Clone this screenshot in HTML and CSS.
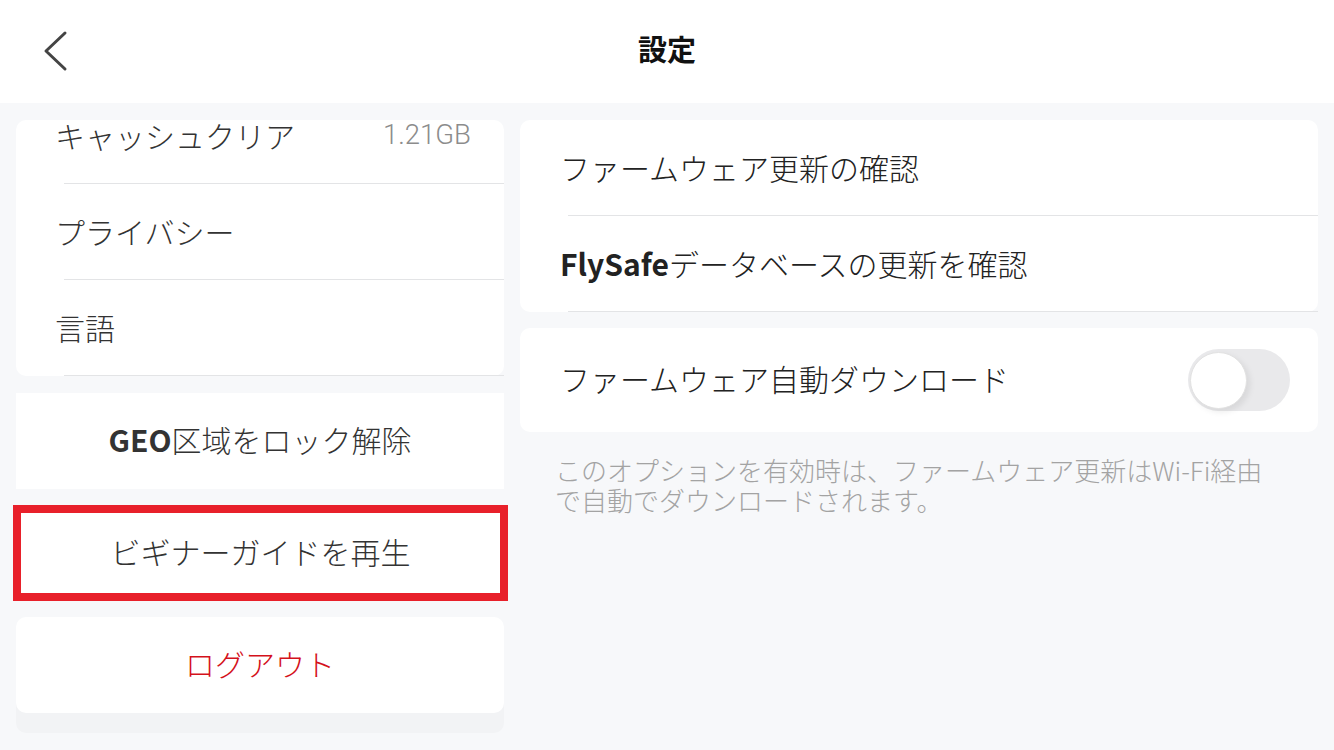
FILE: index.html
```html
<!DOCTYPE html>
<html lang="ja">
<head>
<meta charset="utf-8">
<title>設定</title>
<link rel="stylesheet" href="styles.css">
</head>
<body>
<header class="topbar">
  <div class="topbar-left">
    <svg class="back" width="30" height="44" viewBox="0 0 30 44" aria-hidden="true">
      <polyline points="24,3 5,21 24,39" fill="none" stroke="#444" stroke-width="3" stroke-linecap="round" stroke-linejoin="round"/>
    </svg>
  </div>
  <h1 class="title">設定</h1>
  <div></div>
</header>
<main class="content">
  <section class="col-left">
    <div class="card list-card">
      <div class="row first"><span class="label">キャッシュクリア</span><span class="value">1.21GB</span></div>
      <div class="row"><span class="label">プライバシー</span></div>
      <div class="row"><span class="label">言語</span></div>
    </div>
    <div class="card button-card geo"><span class="btn-text"><b class="latin">GEO</b>区域をロック解除</span></div>
    <div class="button-card highlight"><span class="btn-text">ビギナーガイドを再生</span></div>
    <div class="card button-card logout"><span class="btn-text red">ログアウト</span></div>
  </section>
  <section class="col-right">
    <div class="card">
      <div class="row r-row"><span class="label dark">ファームウェア更新の確認</span></div>
      <div class="row r-row"><span class="label dark"><b class="latin">FlySafe</b>データベースの更新を確認</span></div>
    </div>
    <div class="card toggle-card">
      <span class="label dark">ファームウェア自動ダウンロード</span>
      <span class="switch"><span class="knob"></span></span>
    </div>
    <p class="caption">このオプションを有効時は、ファームウェア更新はWi-Fi経由で自動でダウンロードされます。</p>
  </section>
</main>
</body>
</html>
```
FILE: styles.css
```css
* { box-sizing: border-box; }
html, body { margin: 0; padding: 0; }
body {
  width: 1334px;
  height: 750px;
  overflow: hidden;
  background: #f7f8fa;
  font-family: "Noto Sans CJK JP", "Noto Sans", sans-serif;
  color: #333;
}
.topbar {
  height: 103px;
  background: #fff;
  display: grid;
  grid-template-columns: 1fr auto 1fr;
  align-items: center;
}
.topbar-left { padding-left: 41px; display: flex; align-items: center; }
.back { display: block; }
.title {
  margin: 0 0 6px 0;
  font-size: 29px;
  font-weight: 700;
  color: #111;
  line-height: 1;
}
.content {
  display: grid;
  grid-template-columns: 488px 798px;
  column-gap: 16px;
  padding: 17px 16px 0 16px;
  align-items: start;
}
.col-left { display: flex; flex-direction: column; }
.col-right { display: flex; flex-direction: column; }
.card {
  background: #fff;
  border-radius: 10px;
}
.list-card {
  height: 256px;
}
.row {
  height: 96px;
  display: flex;
  align-items: center;
  justify-content: space-between;
  padding: 0 33px 2px 39px;
  position: relative;
}
.row.first {
  height: 64px;
  align-items: flex-start;
  padding-top: 0;
}
.row::after {
  content: "";
  position: absolute;
  left: 48px;
  right: 0;
  bottom: 0;
  height: 1px;
  background: #e3e4e6;
}
.label {
  font-size: 30px;
  font-weight: 300;
  line-height: 1;
  color: #333;
}
.label.dark { color: #222; }
.value {
  font-family: "Roboto", "Liberation Sans", sans-serif;
  font-size: 27.5px;
  font-weight: 300;
  line-height: 30px;
  color: #8c8c8c;
}
.latin { font-weight: 700; }
.button-card {
  height: 96px;
  display: flex;
  align-items: center;
  justify-content: center;
  background: #fff;
  padding-bottom: 4px;
}
.geo { margin-top: 17px; border-radius: 0; }
.btn-text { font-size: 30px; font-weight: 300; color: #333; line-height: 1; }
.btn-text .latin { color: #333; font-weight: 700; }
.highlight {
  margin: 16px -4px 0 -3px;
  border: 8px solid #e8202a;
}
.logout {
  margin-top: 16px;
  border-radius: 10px;
  box-shadow: 0 20px 0 #f2f3f5;
}
.red { color: #d4111b; }
.r-row { padding-left: 40px; }
.toggle-card {
  margin-top: 16px;
  height: 104px;
  display: flex;
  align-items: center;
  justify-content: space-between;
  padding: 0 28px 0 40px;
}
.toggle-card .label { margin-bottom: 5px; }
.switch {
  width: 102px;
  height: 62px;
  border-radius: 31px;
  background: #e9e9eb;
  display: flex;
  align-items: center;
  padding-left: 2px;
}
.knob {
  width: 57px;
  height: 57px;
  border-radius: 50%;
  background: #fff;
  border: 1px solid #e2e2e2;
  box-shadow: 3px 3px 6px rgba(0,0,0,0.08);
}
.caption {
  margin: 23px 0 0 35px;
  width: 720px;
  font-size: 26px;
  font-weight: 300;
  line-height: 30px;
  color: #a3a3a3;
}
```
